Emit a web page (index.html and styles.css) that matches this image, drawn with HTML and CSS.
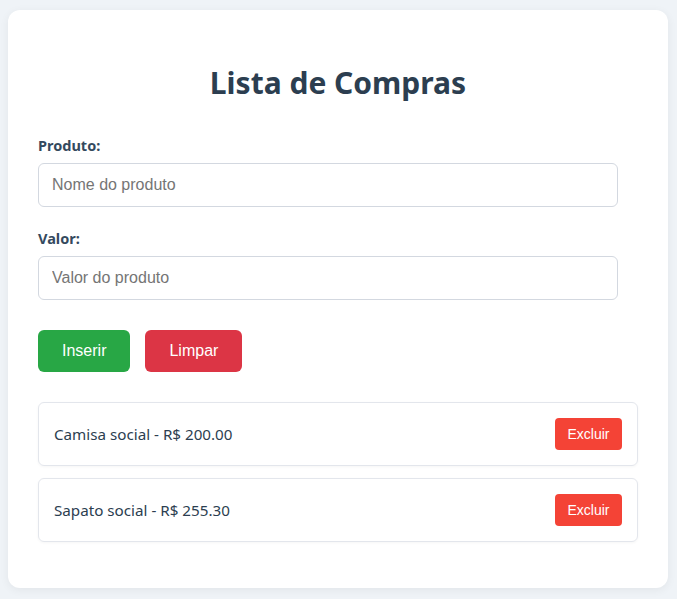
FILE: index.html
```html
<!DOCTYPE html>
<html lang="pt-BR">
<head>
<meta charset="utf-8">
<title>Lista de Compras</title>
<link rel="stylesheet" href="styles.css">
</head>
<body>
<div class="card">
  <h1 class="title">Lista de Compras</h1>
  <div class="field">
    <label class="label" for="produto">Produto:</label>
    <input class="input" id="produto" type="text" placeholder="Nome do produto">
  </div>
  <div class="field">
    <label class="label" for="valor">Valor:</label>
    <input class="input" id="valor" type="text" placeholder="Valor do produto">
  </div>
  <div class="actions">
    <button class="btn btn-insert">Inserir</button>
    <button class="btn btn-clear">Limpar</button>
  </div>
  <ul class="list">
    <li class="item"><span class="item-text">Camisa social - R$ 200.00</span><button class="btn-delete">Excluir</button></li>
    <li class="item"><span class="item-text">Sapato social - R$ 255.30</span><button class="btn-delete">Excluir</button></li>
  </ul>
</div>
</body>
</html>
```
FILE: styles.css
```css
html, body {
  margin: 0;
  padding: 0;
}
body {
  background: #eff3f7;
  font-family: "Noto Sans", "Open Sans", sans-serif;
  color: #2c3e50;
}
.card {
  width: 600px;
  margin: 10px 9px 10px 8px;
  padding: 30px;
  background: #ffffff;
  border-radius: 12px;
  box-shadow: 0 2px 10px rgba(0, 0, 0, 0.06);
}
.title {
  margin: 22px 0 32px;
  text-align: center;
  font-size: 30px;
  font-weight: 700;
  color: #2c3e50;
}
.field {
  display: flex;
  flex-direction: column;
  margin-bottom: 21px;
}
.label {
  font-size: 14.5px;
  font-weight: 700;
  color: #34495e;
  margin-bottom: 8px;
}
.input {
  width: 580px;
  box-sizing: border-box;
  height: 44px;
  padding: 0 13px;
  border: 1px solid #d3d8e0;
  border-radius: 6px;
  font-family: "Liberation Sans", Arial, sans-serif;
  font-size: 16px;
  color: #333;
  outline: none;
}
.input::placeholder {
  color: #757575;
}
.actions {
  display: flex;
  gap: 15px;
  margin-top: 30px;
}
.btn {
  height: 42px;
  padding: 0 24px;
  border: none;
  border-radius: 6px;
  color: #fff;
  font-family: "Liberation Sans", Arial, sans-serif;
  font-size: 16px;
}
.btn-insert { background: #28a745; }
.btn-clear { background: #dc3545; }
.list {
  list-style: none;
  margin: 30px 0 16px;
  padding: 0;
  display: flex;
  flex-direction: column;
  gap: 12px;
}
.item {
  display: flex;
  align-items: center;
  justify-content: space-between;
  padding: 15px;
  border: 1px solid #e3e6ec;
  border-radius: 6px;
  box-shadow: 0 1px 3px rgba(0, 0, 0, 0.04);
}
.item-text {
  font-size: 15.2px;
  color: #2c3e50;
}
.btn-delete {
  min-width: 67px;
  height: 32px;
  padding: 0 12px;
  border: none;
  border-radius: 4px;
  background: #f44336;
  color: #fff;
  font-family: "Liberation Sans", Arial, sans-serif;
  font-size: 14px;
}
```
